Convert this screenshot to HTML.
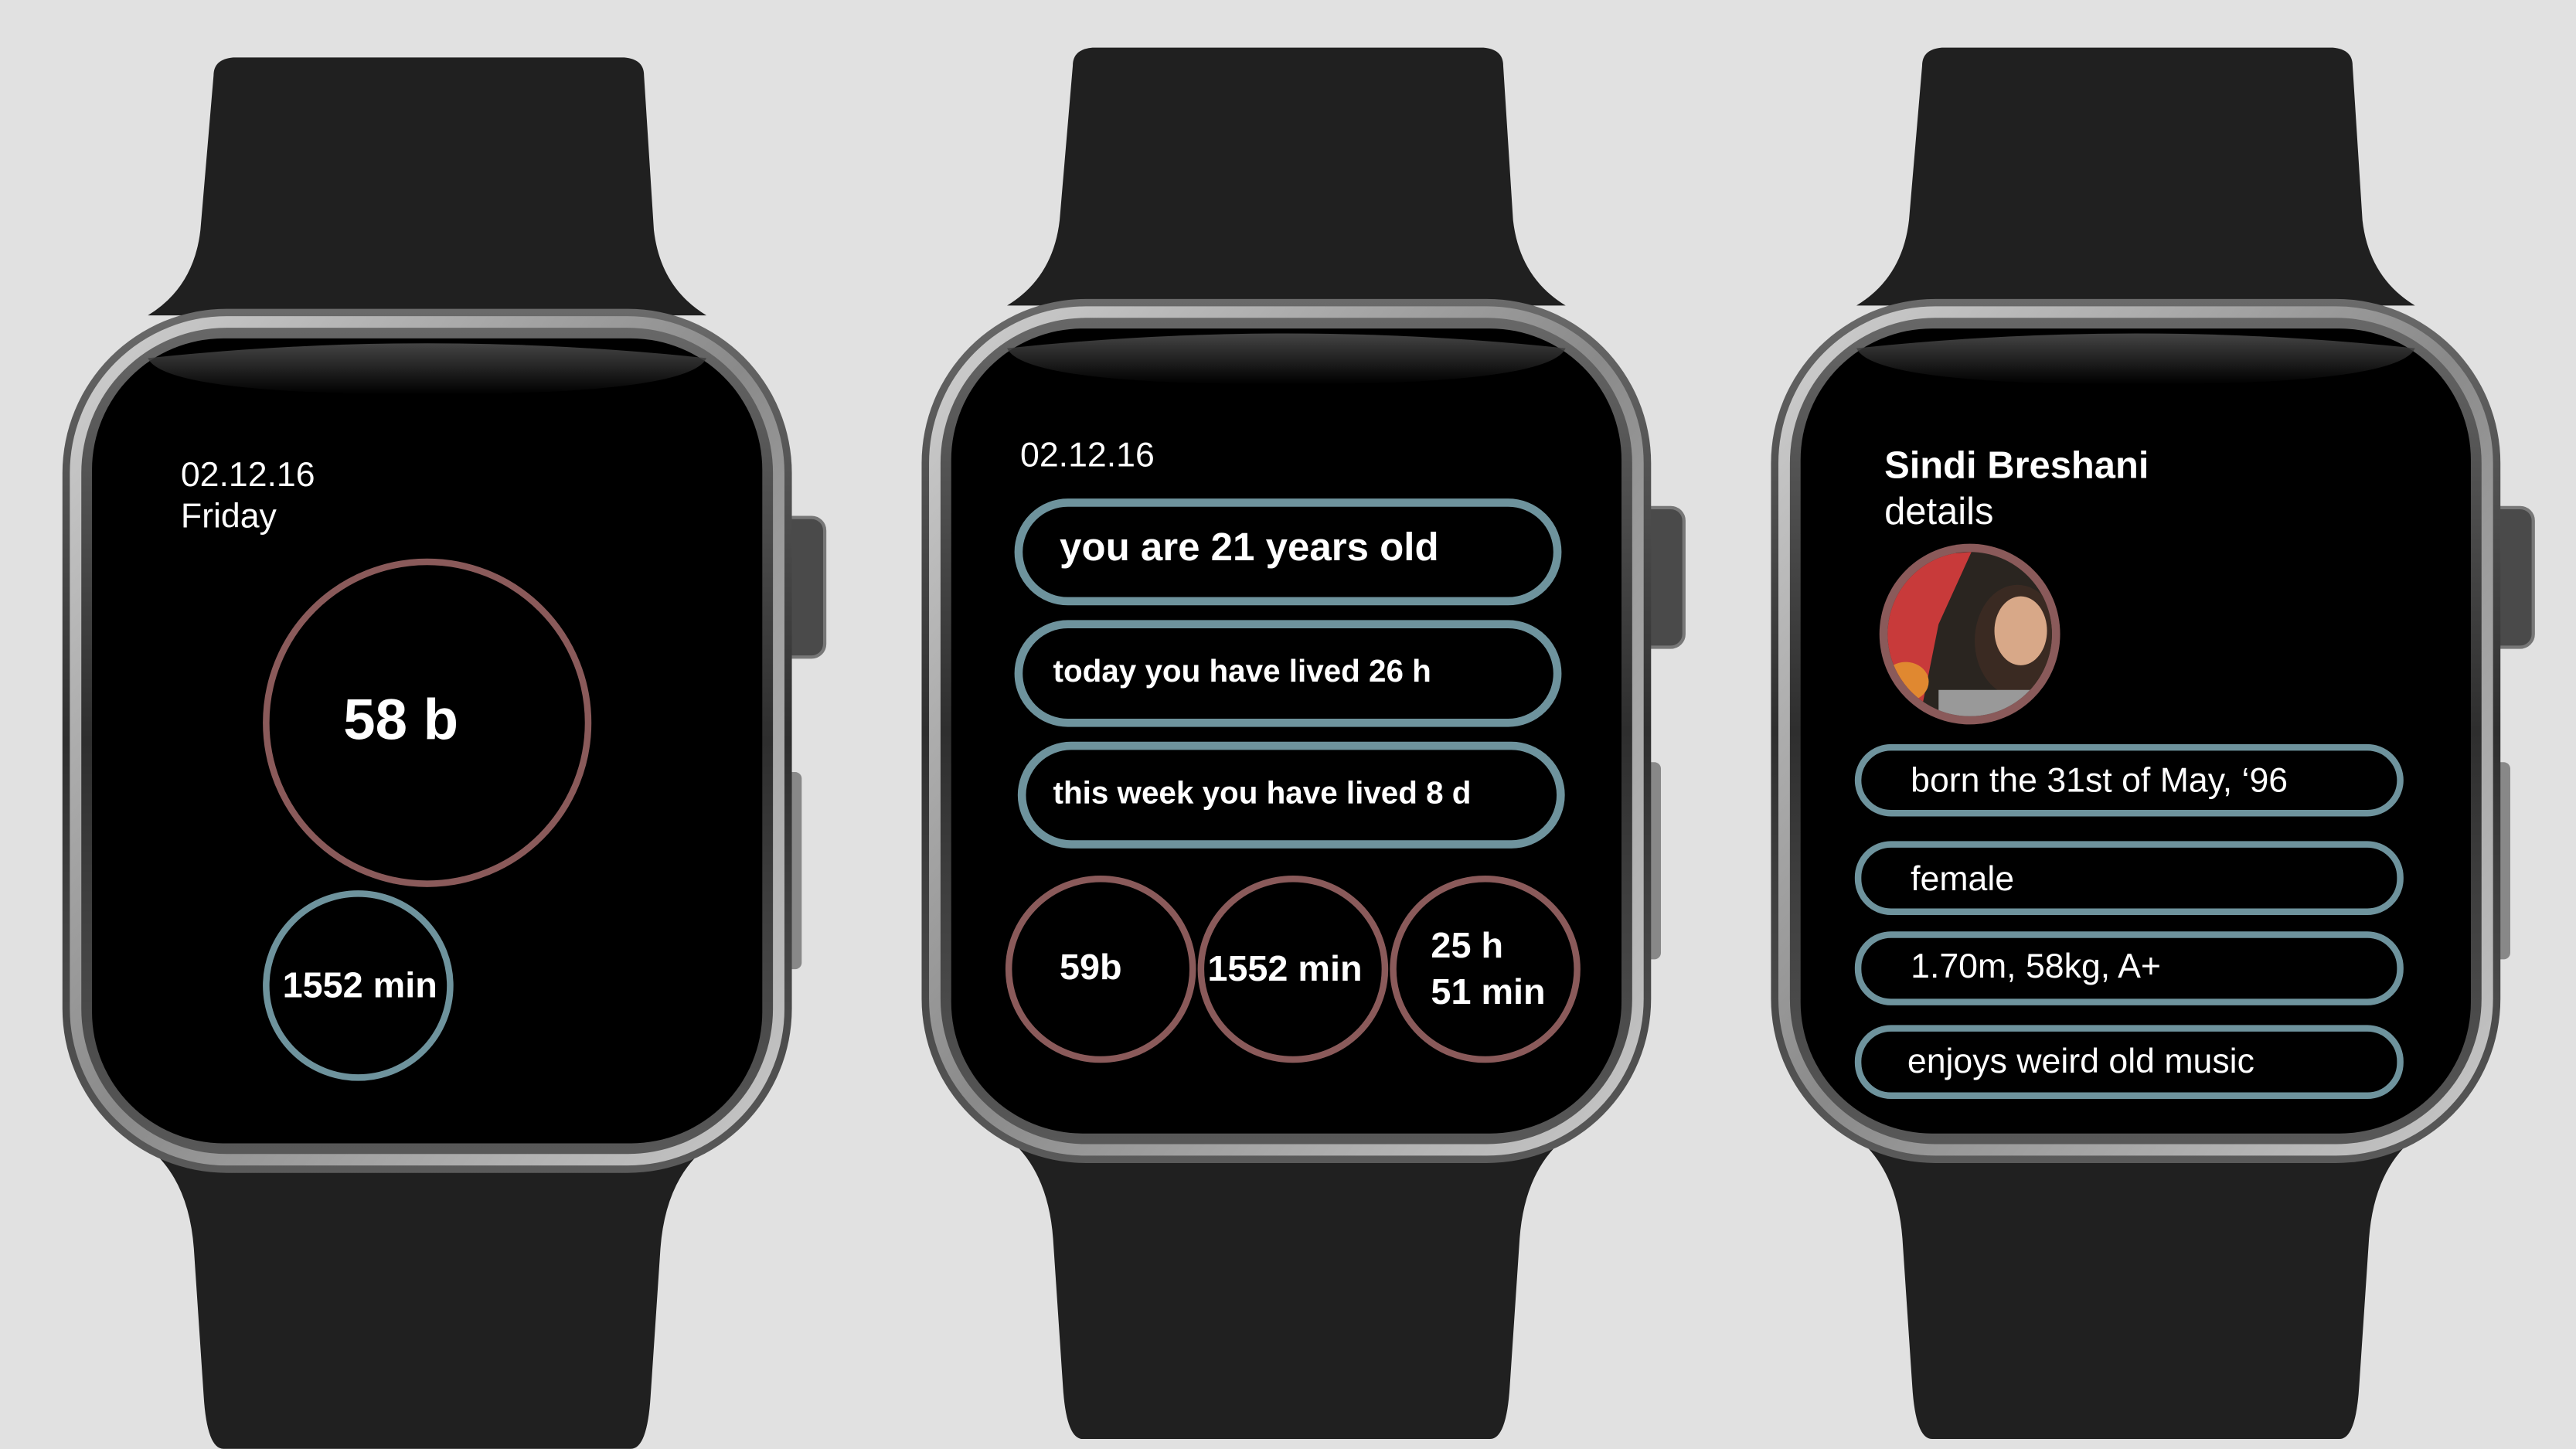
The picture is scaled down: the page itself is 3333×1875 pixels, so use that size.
<!DOCTYPE html>
<html><head><meta charset="utf-8"><style>
html,body{margin:0;padding:0;width:3333px;height:1875px;overflow:hidden;background:#e1e1e1}
#s{position:absolute;left:0;top:0;width:1568px;height:882px;transform:scale(2.12564);transform-origin:0 0;font-family:"Liberation Sans","DejaVu Sans",sans-serif;color:#fff}
.t{position:absolute;white-space:nowrap;line-height:1}
.b{font-weight:bold}
</style></head><body><div id="s">
<svg width="1568" height="882" style="position:absolute;left:0;top:0">
<defs>
<linearGradient id="cs" x1="0" y1="0" x2="0" y2="1"><stop offset="0" stop-color="#6a6a6a"/><stop offset=".5" stop-color="#2e2e2e"/><stop offset="1" stop-color="#5a5a5a"/></linearGradient>
<linearGradient id="ring" x1="0" y1="0" x2="1" y2="1"><stop offset="0" stop-color="#d0d0d0"/><stop offset=".5" stop-color="#8a8a8a"/><stop offset="1" stop-color="#c8c8c8"/></linearGradient>
<linearGradient id="gl" x1="0" y1="0" x2="0" y2="1"><stop offset="0" stop-color="#555"/><stop offset="1" stop-color="#000"/></linearGradient>
<g id="w">
<path d="M130,46 Q130,36 142,35 L380,35 Q392,36 392,46 L398,140 Q402,175 430,192 L90,192 Q118,175 122,140 Z" fill="#202020"/>
<path d="M92,700 L428,700 Q405,720 402,760 L396,850 Q394,882 384,882 L136,882 Q126,882 124,850 L118,760 Q115,720 92,700 Z" fill="#202020"/>
<rect x="470" y="315" width="32" height="85" rx="8" fill="#4a4a4a" stroke="#777" stroke-width="2"/>
<rect x="476" y="470" width="12" height="120" rx="4" fill="#888"/>
<rect x="38" y="188" width="444" height="526" rx="100" fill="url(#cs)"/>
<rect x="46" y="196" width="428" height="510" rx="92" fill="none" stroke="url(#ring)" stroke-width="7"/>
<rect x="56" y="206" width="408" height="490" rx="80" fill="#000"/>
<path d="M90,218 Q260,200 430,218 Q420,240 260,240 Q100,240 90,218 Z" fill="url(#gl)" opacity=".8"/>
</g>
</defs>
<use href="#w" x="0" y="0"/>
<use href="#w" x="523" y="-6"/>
<use href="#w" x="1040" y="-6"/>
<g fill="none" stroke-width="4">
<circle cx="260" cy="440" r="98" stroke="#8a5a5a"/>
<circle cx="218" cy="600" r="56" stroke="#6e939d"/>
<rect x="620" y="306" width="328" height="60" rx="30" stroke="#6e939d" stroke-width="5"/>
<rect x="620" y="380" width="328" height="60" rx="30" stroke="#6e939d" stroke-width="5"/>
<rect x="622" y="454" width="328" height="60" rx="30" stroke="#6e939d" stroke-width="5"/>
<ellipse cx="670" cy="590" rx="56" ry="55" stroke="#8a5a5a"/>
<ellipse cx="787" cy="590" rx="56" ry="55" stroke="#8a5a5a"/>
<ellipse cx="904" cy="590" rx="56" ry="55" stroke="#8a5a5a"/>
<rect x="1131" y="455" width="330" height="40" rx="20" stroke="#6e939d"/>
<rect x="1131" y="514" width="330" height="41" rx="20" stroke="#6e939d"/>
<rect x="1131" y="569" width="330" height="41" rx="20" stroke="#6e939d"/>
<rect x="1131" y="626" width="330" height="41" rx="20" stroke="#6e939d"/>
</g>
<circle cx="1199" cy="386" r="55" fill="#8a5a5a"/>
<clipPath id="pc"><circle cx="1199" cy="386" r="50"/></clipPath>
<g clip-path="url(#pc)">
<rect x="1140" y="330" width="120" height="120" fill="#2a2520"/>
<path d="M1150,340 L1200,336 L1180,380 L1170,430 L1140,430 Z" fill="#c83a3a"/>
<ellipse cx="1228" cy="390" rx="26" ry="34" fill="#3a2a22"/>
<ellipse cx="1230" cy="384" rx="16" ry="21" fill="#d8a888"/>
<ellipse cx="1160" cy="415" rx="14" ry="12" fill="#e08830"/>
<rect x="1180" y="420" width="60" height="30" fill="#999"/>
</g>
</svg>
<div class="t" style="left:110px;top:279px;font-size:21px">02.12.16</div>
<div class="t" style="left:110px;top:304px;font-size:21px">Friday</div>
<div class="t b" style="left:209px;top:421px;font-size:35px">58 b</div>
<div class="t b" style="left:172px;top:589px;font-size:22px">1552 min</div>
<div class="t" style="left:621px;top:267px;font-size:21px">02.12.16</div>
<div class="t b" style="left:645px;top:322px;font-size:24px">you are 21 years old</div>
<div class="t b" style="left:641px;top:400px;font-size:19px">today you have lived 26 h</div>
<div class="t b" style="left:641px;top:474px;font-size:19px">this week you have lived 8 d</div>
<div class="t b" style="left:645px;top:578px;font-size:22px">59b</div>
<div class="t b" style="left:735px;top:579px;font-size:22px">1552 min</div>
<div class="t b" style="left:871px;top:562px;font-size:22px;line-height:28px">25 h<br>51 min</div>
<div class="t b" style="left:1147px;top:272px;font-size:23px">Sindi Breshani</div>
<div class="t" style="left:1147px;top:300px;font-size:23px">details</div>
<div class="t" style="left:1163px;top:465px;font-size:21px">born the 31st of May, ‘96</div>
<div class="t" style="left:1163px;top:525px;font-size:21px">female</div>
<div class="t" style="left:1163px;top:578px;font-size:21px">1.70m, 58kg, A+</div>
<div class="t" style="left:1161px;top:636px;font-size:21px">enjoys weird old music</div>
</div></body></html>
